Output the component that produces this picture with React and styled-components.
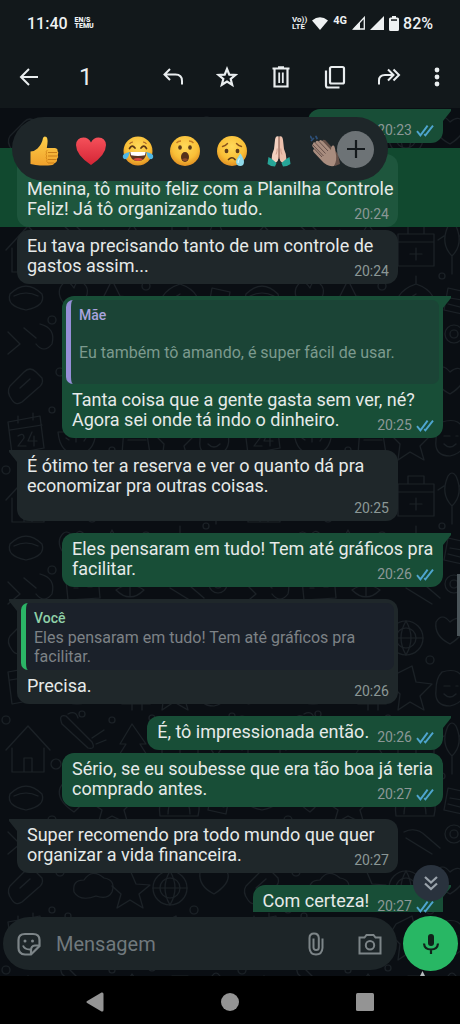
import React from "react";
import styled, { createGlobalStyle, css } from "styled-components";

const color = {
  header: "#12181b",
  wall: "#0a0e13",
  doodle: "#1b2126",
  sent: "#184e37",
  received: "#1f272a",
  text: "#e6eae9",
  icon: "#e9edef",
  muted: "#8b9796",
};

const GlobalStyle = createGlobalStyle`
  *, *::before, *::after { box-sizing: border-box; }
  html, body { margin: 0; padding: 0; background: #000; }
  body { font-family: Roboto, "Noto Sans", sans-serif; color: ${color.text}; }
  button { border: 0; padding: 0; background: none; color: inherit; font: inherit; cursor: pointer; }
  svg { display: block; flex: none; }
`;

const Page = styled.div`
  min-height: 100vh;
  display: flex;
  flex-direction: column;
  overflow-x: hidden;
`;

const Header = styled.header`
  background: ${color.header};
`;

const StatusBar = styled.div`
  display: flex;
  align-items: center;
  height: 46px;
  padding: 0 27px;
  font-size: 16px;
  font-weight: 500;
  color: #eef1f2;
`;

const Clock = styled.time`
  margin-right: 7px;
`;

const TinyStack = styled.span`
  display: flex;
  flex-direction: column;
  font-size: 7px;
  line-height: 6px;
  font-weight: 900;
  margin-right: ${(p) => (p.$push ? "auto" : "5px")};
`;

const LteStack = styled(TinyStack)`
  font-size: 8px;
  line-height: 7px;
  font-weight: 700;
`;

const StatusIcons = styled.span`
  display: flex;
  align-items: center;
  gap: 5px;
  margin-right: 4px;
`;

const Network = styled.span`
  font-size: 11px;
  line-height: 12px;
  padding-bottom: 4px;
  font-weight: 700;
`;

const Toolbar = styled.div`
  display: flex;
  align-items: center;
  height: 62px;
  padding: 0 2px;
  color: ${color.icon};
`;

const ToolButton = styled.button`
  display: flex;
  align-items: center;
  justify-content: center;
  width: ${(p) => (p.$narrow ? "42px" : "54px")};
  height: 48px;
`;

const Count = styled.span`
  flex: 1;
  padding-left: 23px;
  font-size: 24px;
  line-height: 28px;
`;

const Chat = styled.main`
  position: relative;
  flex: 1;
  display: flex;
  flex-direction: column;
  background: ${color.wall};
`;

const Wallpaper = styled.svg`
  position: absolute;
  inset: 0;
  width: 100%;
  height: 100%;
`;

const Messages = styled.section`
  position: relative;
  padding-top: 1px;
`;

const Row = styled.div`
  display: flex;
  justify-content: ${(p) => (p.$sent ? "flex-end" : "flex-start")};
  padding: 0 17px;
  margin-top: ${(p) => (p.$close ? "3px" : "12px")};
  &:first-child { margin-top: 0; }
  ${(p) =>
    p.$selected &&
    css`
      margin-top: 5px;
      padding-top: 6px;
      background: #11492f;
    `}
`;

const Bubble = styled.article`
  position: relative;
  width: ${(p) => (p.$wide ? "calc(100% - 45px)" : "auto")};
  min-width: ${(p) => (p.$short ? "135px" : "0")};
  min-height: ${(p) => (p.$selected ? "73px" : p.$cut ? "0" : "34px")};
  display: flex;
  flex-direction: column;
  justify-content: flex-end;
  border-radius: ${(p) => (p.$cut ? "12px 12px 0 0" : "12px")};
  background: ${(p) => (p.$selected ? "#1e563d" : p.$sent ? color.sent : color.received)};
  ${(p) =>
    p.$tail &&
    css`
      border-top-${p.$sent ? "right" : "left"}-radius: 0;
      &::after {
        content: "";
        position: absolute;
        top: 0;
        ${p.$sent ? "right" : "left"}: -8px;
        width: 8px;
        height: 12px;
        background: inherit;
        clip-path: polygon(${p.$sent ? "0 0, 100% 0, 100% 2px, 0 100%" : "0 0, 100% 0, 100% 100%, 0 2px"});
      }
    `}
`;

const Content = styled.div`
  display: ${(p) => (p.$inline ? "flex" : "grid")};
  grid-template-columns: minmax(0, 1fr);
  gap: ${(p) => (p.$inline ? "8px" : "0")};
  justify-content: ${(p) => (p.$inline ? "flex-end" : "stretch")};
  padding: 6px 9px ${(p) => (p.$cut ? "1px" : "8px")} 10px;
`;

const Text = styled.p`
  grid-area: 1 / 1;
  margin: 0;
  font-size: 18px;
  line-height: 20px;
  white-space: nowrap;
`;

const Line = styled.span`
  display: block;
`;

const Meta = styled.footer`
  grid-area: ${(p) => (p.$below ? "2 / 1" : "1 / 1")};
  justify-self: end;
  align-self: end;
  display: flex;
  align-items: center;
  gap: 4px;
  height: 12px;
  margin-top: ${(p) => (p.$below ? "6px" : "0")};
  margin-bottom: -1px;
  font-size: 14px;
  line-height: 12px;
  color: ${color.muted};
`;

const Quote = styled.blockquote`
  margin: 4px 4px 0;
  padding: 5px 8px 4px;
  border-left: 5px solid ${(p) => (p.$own ? "#2bb566" : "#968fd8")};
  border-radius: 7px;
  background: ${(p) => (p.$sent ? "#1b4436" : "#1b212a")};
`;

const QuoteName = styled.cite`
  display: block;
  font-style: normal;
  font-size: 14px;
  line-height: 20px;
  font-weight: 500;
  color: ${(p) => (p.$own ? "#8fd0a8" : "#a9a3dd")};
`;

const QuoteText = styled.div`
  display: flex;
  flex-direction: column;
  justify-content: center;
  min-height: ${(p) => (p.$tall ? "55px" : "38px")};
  font-size: 16px;
  line-height: 19px;
  white-space: nowrap;
  color: ${(p) => (p.$tall ? "#7c9a8e" : "#7d8286")};
`;

const ReactionBar = styled.div`
  position: absolute;
  top: 9px;
  left: 12px;
  display: flex;
  align-items: center;
  height: 64px;
  padding: 4px 14px 0 8px;
  border-radius: 32px;
  background: #1e2629;
`;

const ReactionButton = styled.button`
  display: flex;
  justify-content: center;
  width: 47px;
`;

const MoreReactions = styled.button`
  display: flex;
  align-items: center;
  justify-content: center;
  width: 37px;
  height: 37px;
  margin: 0 0 4px -12px;
  border-radius: 50%;
  background: #6d7376;
  color: #14191c;
`;

const ScrollThumb = styled.span`
  position: absolute;
  top: 466px;
  right: 0;
  width: 3px;
  height: 62px;
  background: #4a5459;
`;

const JumpButton = styled.button`
  position: absolute;
  right: 11px;
  bottom: 75px;
  width: 36px;
  height: 36px;
  display: flex;
  align-items: center;
  justify-content: center;
  border-radius: 50%;
  background: #29323d;
  color: #9aa3ab;
`;

const Composer = styled.form`
  position: relative;
  display: flex;
  align-items: center;
  gap: 6px;
  padding: 4px 2px 5px 3px;
`;

const Field = styled.div`
  flex: 1;
  min-width: 0;
  height: 53px;
  display: flex;
  align-items: center;
  padding-left: 12px;
  border-radius: 27px;
  background: #1d2528;
  color: #7d8588;
`;

const FieldButton = styled.button`
  display: flex;
  align-items: center;
  justify-content: center;
  width: ${(p) => (p.$wide ? "54px" : "28px")};
  height: 40px;
  flex: none;
`;

const MessageInput = styled.input`
  flex: 1;
  min-width: 0;
  margin: 0 0 0 13px;
  padding: 0;
  border: 0;
  outline: 0;
  background: none;
  color: ${color.text};
  font: 400 20px/24px Roboto, "Noto Sans", sans-serif;
  &::placeholder { color: #70797d; opacity: 1; }
`;

const MicButton = styled.button`
  display: flex;
  align-items: center;
  justify-content: center;
  flex: none;
  width: 55px;
  height: 55px;
  border-radius: 50%;
  background: #28b764;
  color: #10231a;
`;

const Tip = styled.svg`
  position: absolute;
  right: 35px;
  bottom: 0;
`;

const NavBar = styled.nav`
  display: flex;
  height: 49px;
  padding: 2px 6% 0;
  background: #000;
  color: #949494;
`;

const NavButton = styled.button`
  flex: 1;
  display: flex;
  align-items: center;
  justify-content: center;
`;

const Stroke = ({ w = 24, h = 24, sw = 2, box, children, ...rest }) => (
  <svg width={w} height={h} viewBox={box || `0 0 ${w} ${h}`} fill="none" stroke="currentColor" strokeWidth={sw} aria-hidden="true" {...rest}>
    {children}
  </svg>
);

const Checks = () => (
  <Stroke w={18} h={13} sw={1.9} color="#4ea5cf">
    <path d="M1 7.2 4.4 11.4 11.6 1.6M8.2 10.2 9.4 11.4 17 1.6" />
  </Stroke>
);

const toolIcons = {
  reply: (
    <Stroke w={22} h={22} sw={2}>
      <path d="M8 3 2.500 8.500 8 14M2.500 8.500H13.500Q20 8.500 20 15V18.500" />
    </Stroke>
  ),
  star: (
    <Stroke w={22} h={22} sw={2.200}>
      <path d="M11 3 13.300 8.600 19.300 9 14.700 12.900 16.200 18.800 11 15.600 5.800 18.800 7.300 12.900 2.700 9 8.700 8.600Z" strokeLinejoin="miter" />
    </Stroke>
  ),
  trash: (
    <Stroke w={20} h={24} sw={2.200}>
      <path d="M1.500 3.500H18.500M7 2.300H13M3.500 4V21.500H16.500V4" />
      <path d="M8.200 7.500V18M11.800 7.500V18" strokeWidth="1.800" />
    </Stroke>
  ),
  copy: (
    <Stroke w={22} h={24} sw={2.200}>
      <rect x="6" y="2" width="14" height="16.500" rx="1.500" />
      <path d="M2 5.500V20.500Q2 22.500 4 22.500H15.500" />
    </Stroke>
  ),
  forward: (
    <Stroke w={24} h={22} sw={2}>
      <path d="M2 18.500V14.500Q2 9 8 9H16M11 3.500 16.500 9 11 14.500M16.500 3.500 22 9 16.500 14.500" />
    </Stroke>
  ),
};

const faceFill = "url(#face)";

const Laugh = () => (
  <svg width="32" height="32" viewBox="0 0 32 32" aria-hidden="true">
    <circle cx="16" cy="16" r="14.500" fill={faceFill} />
    <path d="M7.500 13.500Q10 9 13 13M19 13Q22 9 24.500 13.500" stroke="#5b3716" strokeWidth="1.700" fill="none" strokeLinecap="round" />
    <path d="M7.500 9Q9 7 11 7M21 7Q23 7 24.500 9" stroke="#a8662a" strokeWidth="1.200" fill="none" />
    <path d="M7.500 17H24.500Q24 26 16 26T7.500 17Z" fill="#5b3420" />
    <path d="M8.300 17H23.700L23 20.300Q16 21.500 9 20.300Z" fill="#fff" />
    <path d="M11 24.300Q16 21.500 21 24.300Q16 27.500 11 24.300Z" fill="#d9473f" />
    <path d="M7.500 17Q0 18.500 .8 22.200Q2 25.500 5 23.500Q7 21.500 7.500 17ZM24.500 17Q32 18.500 31.200 22.200Q30 25.500 27 23.500Q25 21.500 24.500 17Z" fill="#4fb7e6" />
  </svg>
);

const Wow = () => (
  <svg width="32" height="32" viewBox="0 0 32 32" aria-hidden="true">
    <circle cx="16" cy="16" r="15" fill={faceFill} />
    <ellipse cx="11" cy="12.500" rx="1.800" ry="2.300" fill="#5b3a1a" />
    <ellipse cx="21" cy="12.500" rx="1.800" ry="2.300" fill="#5b3a1a" />
    <path d="M7.500 8Q9 6 12 6M20 6Q23 6 24.500 8" stroke="#c47a22" strokeWidth="1.300" fill="none" />
    <ellipse cx="16" cy="22" rx="4" ry="5" fill="#54311b" />
    <path d="M13 24.500Q16 22 19 24.500Q16 28 13 24.500Z" fill="#8a4a2b" />
  </svg>
);

const Cry = () => (
  <svg width="32" height="32" viewBox="0 0 32 32" aria-hidden="true">
    <circle cx="16" cy="16" r="15" fill={faceFill} />
    <ellipse cx="10.500" cy="16" rx="1.900" ry="2.300" fill="#5b3a1a" />
    <ellipse cx="21.500" cy="16" rx="1.900" ry="2.300" fill="#5b3a1a" />
    <path d="M6.500 11.500Q9.500 11 11.500 8.500M20.500 8.500Q22.500 11 25.500 11.500" stroke="#8b541d" strokeWidth="1.400" fill="none" strokeLinecap="round" />
    <path d="M12.500 24.500Q16 21 19 24.500" stroke="#5b3a1a" strokeWidth="1.700" fill="none" strokeLinecap="round" />
    <path d="M24.500 18.500Q20 24.500 20 27Q20.500 31 24.200 31T28 27Q28 24 24.500 18.500Z" fill="#8fd9ea" />
    <path d="M23.500 23.500Q21.800 26 22.200 28" stroke="#e0f7fb" strokeWidth="1.200" fill="none" />
  </svg>
);

const Thumb = () => (
  <svg width="32" height="32" viewBox="0 0 32 32" aria-hidden="true">
    <path d="M2.500 16.500Q7 16 9.500 13.500Q14 9 15 3Q16 .5 18.500 2Q20.500 4 18.800 13H27Q30 13.500 29.500 16Q31 17 29.800 20Q31 22 29 24Q29.500 27 26.500 28.300Q25.500 30.500 20 30.500H12Q8 30 2.500 29Z" fill="url(#hand)" />
    <path d="M20 17.500H29M20 21H29.500M20 24.500H28.500M20 28H26" stroke="#c87d18" strokeWidth="1" />
    <path d="M19.500 15Q17.500 16 18.500 18Q17.500 19.500 18.700 21Q17.500 23 19 24.500Q18 27 20 28" stroke="#d98b1c" strokeWidth="1" fill="none" />
  </svg>
);

const Heart = () => (
  <svg width="32" height="32" viewBox="0 0 32 32" aria-hidden="true">
    <path d="M16 30Q1 20 1 10Q1.500 2.500 8.500 2.500Q13.500 2.500 16 7.500Q18.500 2.500 23.500 2.500Q30.500 2.500 31 10Q31 20 16 30Z" fill="url(#heart)" />
  </svg>
);

const Pray = () => (
  <svg width="32" height="32" viewBox="0 0 32 32" aria-hidden="true">
    <path d="M15.800 1.500Q12.500 0 12 5L11 14Q8.500 19 8.500 25L12.500 28Q15.500 26 15.800 22Z" fill="#f3d0bf" />
    <path d="M16.200 1.500Q19.500 0 20 5L21 14Q23.500 19 23.500 25L19.500 28Q16.500 26 16.200 22Z" fill="#ecc0ac" />
    <path d="M16 2V24" stroke="#a8705f" strokeWidth="1" />
    <path d="M13 19.500Q14.300 17 14.200 13.500M19 19.500Q17.700 17 17.800 13.500" stroke="#c99380" strokeWidth=".8" fill="none" />
    <path d="M5.500 22Q9 23.500 13.500 28L12 31.500Q8 31.500 4.500 29ZM26.500 22Q23 23.500 18.500 28L20 31.500Q24 31.500 27.500 29Z" fill="#27a597" />
  </svg>
);

const Clap = () => (
  <svg width="32" height="32" viewBox="0 0 32 32" aria-hidden="true">
    <path d="M12 6Q14 3 17 7L28 19L30 29L25 31L16 24Z" fill="#665149" />
    <path d="M3 9Q3 6 6 8L5.500 7.500Q6 4.500 9 6.500Q10 3.500 13 6.500L21 15Q21 10 23.500 10.500Q25 11 25.500 17Q27.500 25 24 31Q17 32 12 26L4 17.500Q1.800 14.500 4.500 14L2.500 11.500Q1.500 9.500 3 9Z" fill="#a88c7e" />
    <path d="M5.500 8 15.500 18.500M9 6.500 18 16M4.500 14 12 22M3 10 13.500 21" stroke="#66504a" strokeWidth="1" />
    <path d="M1.500 5.500 3.500 3.500M6 1.500 7 3.500M.5 1.500 1.500 3" stroke="#2d4f78" strokeWidth="1.700" strokeLinecap="round" />
  </svg>
);

const reactions = [
  ["Joinha", Thumb],
  ["Coração", Heart],
  ["Risada", Laugh],
  ["Surpresa", Wow],
  ["Tristeza", Cry],
  ["Gratidão", Pray],
  ["Palmas", Clap],
];

const EmojiPaints = () => (
  <defs>
    <radialGradient id="face" cx=".5" cy=".35" r=".65">
      <stop offset="0" stopColor="#ffd95a" />
      <stop offset=".65" stopColor="#f9bf37" />
      <stop offset="1" stopColor="#e18f22" />
    </radialGradient>
    <linearGradient id="hand" x1="0" y1="0" x2="0" y2="1">
      <stop offset="0" stopColor="#ffd04a" />
      <stop offset="1" stopColor="#f0a12b" />
    </linearGradient>
    <linearGradient id="heart" x1="0" y1="0" x2="0" y2="1">
      <stop offset="0" stopColor="#f5505a" />
      <stop offset="1" stopColor="#d42535" />
    </linearGradient>
  </defs>
);

const ChatWallpaper = () => (
  <Wallpaper aria-hidden="true">
    <EmojiPaints />
    <defs>
      <pattern id="doodles" width="236" height="250" patternUnits="userSpaceOnUse">
        <g fill="none" stroke={color.doodle} strokeWidth="1.200" strokeLinejoin="round" strokeLinecap="round">
          <path d="M10 28 24 14Q30 8 36 14L42 20Q44 26 38 30L22 44Q16 48 12 42Q6 34 10 28ZM20 30 30 21" />
          <circle cx="60" cy="14" r="4" />
          <circle cx="52" cy="52" r="3" />
          <path d="M74 34Q72 22 84 22Q92 10 104 20Q116 22 112 34Q108 42 96 38Q80 44 74 34Z" />
          <path d="M130 12 136 26 150 27 139 36 143 50 130 42 117 50 121 36 112 28" />
          <circle cx="170" cy="30" r="17" /><circle cx="170" cy="30" r="10" />
          <path d="M153 30H187M170 13Q160 30 170 47M170 13Q180 30 170 47" />
          <path d="M200 14Q206 4 214 14Q224 6 228 16Q230 26 214 36Q198 28 200 14Z" />
          <path d="M8 64 40 58 44 90 12 96ZM10 72 42 67M18 58V65M33 55V62" />
          <path d="M18 78Q24 74 24 80L18 88H26M32 74 28 83H37M34 78V88" />
          <path d="M58 74H96Q94 96 77 96T58 74ZM66 80 69 82M76 80V84M86 80 84 83" />
          <circle cx="106" cy="64" r="4" /><circle cx="112" cy="92" r="3" />
          <path d="M124 70Q134 58 146 70L150 96H122ZM128 82H146M132 96V102M142 96V102" />
          <path d="M160 66 176 58 180 74 196 76 184 88 188 102 174 94 162 102 164 86 154 76Z" />
          <path d="M206 64Q226 58 228 76Q232 94 214 98Q198 98 200 82Q200 70 206 64M208 78H214M220 78H222M208 86Q214 92 220 86" />
          <path d="M6 142 28 118 50 142M12 140V164H44V140M24 164V150H32V164" />
          <path d="M62 116Q58 106 66 108L92 134Q96 142 88 140ZM68 106Q76 102 78 110M92 130 104 122M96 136 106 132" />
          <circle cx="56" cy="156" r="5" /><circle cx="112" cy="112" r="3" />
          <path d="M132 116 120 136H126L116 152H130V162H136V152H150L140 136H146Z" />
          <path d="M162 126H198V158H162ZM162 134H198M172 126V118H188V126M174 146H186M180 140V152" />
          <path d="M212 118Q204 136 216 148Q228 136 220 118Q216 112 212 118ZM216 148V166M208 128 202 132M224 128 230 132" />
          <path d="M10 186Q26 170 42 186Q46 198 26 202Q6 198 10 186ZM14 188Q26 182 38 188" />
          <path d="M60 180Q66 168 74 180Q78 168 86 178Q92 188 74 204Q56 192 60 180Z" />
          <path d="M104 188 112 172 120 188 136 190 124 202 128 216 112 208 98 216 102 202 90 194" />
          <circle cx="146" cy="178" r="4" /><circle cx="142" cy="216" r="3" />
          <circle cx="68" cy="58" r="3" /><circle cx="194" cy="52" r="4" /><circle cx="92" cy="160" r="4" />
          <circle cx="52" cy="212" r="4" /><circle cx="232" cy="108" r="3" /><circle cx="152" cy="110" r="3" />
          <circle cx="206" cy="168" r="3" /><circle cx="6" cy="112" r="4" /><circle cx="82" cy="106" r="3" />
          <path d="M160 208Q156 184 180 176Q204 184 198 208ZM168 206Q168 192 180 186M180 176V168M190 206Q190 196 184 190" />
          <path d="M212 180 230 184 226 206 208 202ZM214 190 226 192M212 196 224 199" />
          <path d="M8 224 20 236 8 246M24 220 36 230M40 216Q56 220 52 236Q44 246 36 236" />
          <path d="M66 222 98 218 100 240 68 242ZM74 230H78M88 229H92" />
          <path d="M116 232Q130 222 144 232Q130 246 116 232ZM130 226V238" />
          <path d="M168 224Q180 218 190 228L204 240M170 230 196 246" />
          <circle cx="218" cy="226" r="9" /><circle cx="218" cy="226" r="4" />
        </g>
      </pattern>
    </defs>
    <rect width="100%" height="100%" fill="url(#doodles)" />
  </Wallpaper>
);

const messages = [
  { id: 1, sent: true, short: true, tail: true, lines: [], time: "20:23" },
  { id: 2, wide: true, selected: true, lines: ["Menina, tô muito feliz com a Planilha Controle", "Feliz! Já tô organizando tudo."], time: "20:24" },
  { id: 3, wide: true, close: true, lines: ["Eu tava precisando tanto de um controle de", "gastos assim..."], time: "20:24" },
  {
    id: 4, sent: true, wide: true, tail: true,
    quote: { name: "Mãe", lines: ["Eu também tô amando, é super fácil de usar."], tall: true },
    lines: ["Tanta coisa que a gente gasta sem ver, né?", "Agora sei onde tá indo o dinheiro."], time: "20:25",
  },
  { id: 5, wide: true, tail: true, below: true, lines: ["É ótimo ter a reserva e ver o quanto dá pra", "economizar pra outras coisas."], time: "20:25" },
  { id: 6, sent: true, wide: true, tail: true, lines: ["Eles pensaram em tudo! Tem até gráficos pra", "facilitar."], time: "20:26" },
  {
    id: 7, wide: true, tail: true,
    quote: { name: "Você", own: true, lines: ["Eles pensaram em tudo! Tem até gráficos pra", "facilitar."] },
    lines: ["Precisa."], time: "20:26",
  },
  { id: 8, sent: true, inline: true, tail: true, lines: ["É, tô impressionada então."], time: "20:26" },
  { id: 9, sent: true, wide: true, close: true, lines: ["Sério, se eu soubesse que era tão boa já teria", "comprado antes."], time: "20:27" },
  { id: 10, wide: true, tail: true, lines: ["Super recomendo pra todo mundo que quer", "organizar a vida financeira."], time: "20:27" },
  { id: 11, sent: true, inline: true, tail: true, cut: true, lines: ["Com certeza!"], time: "20:27" },
];

const Message = ({ m }) => (
  <Row $sent={m.sent} $close={m.close} $selected={m.selected}>
    <Bubble $sent={m.sent} $wide={m.wide} $short={m.short} $tail={m.tail} $selected={m.selected} $cut={m.cut}>
      {m.quote && (
        <Quote $own={m.quote.own} $sent={m.sent}>
          <QuoteName $own={m.quote.own}>{m.quote.name}</QuoteName>
          <QuoteText $tall={m.quote.tall}>
            {m.quote.lines.map((l) => <Line key={l}>{l}</Line>)}
          </QuoteText>
        </Quote>
      )}
      <Content $inline={m.inline} $cut={m.cut}>
        {m.lines.length > 0 && (
          <Text>{m.lines.map((l) => <Line key={l}>{l}</Line>)}</Text>
        )}
        <Meta $below={m.below}>
          <time>{m.time}</time>
          {m.sent && <Checks />}
        </Meta>
      </Content>
    </Bubble>
  </Row>
);

export default function App() {
  return (
    <Page>
      <GlobalStyle />
      <Header>
        <StatusBar>
          <Clock>11:40</Clock>
          <TinyStack $push><span>EN/S</span><span>TEMU</span></TinyStack>
          <LteStack><span>Vo))</span><span>LTE</span></LteStack>
          <StatusIcons>
            <svg width="16" height="13" viewBox="0 0 16 13" fill="currentColor"><path d="M0 3.500Q8-3 16 3.500L8 13Z" /></svg>
            <Network>4G</Network>
            <Stroke w={13} h={14} sw={1.300}>
              <path d="M1.500 13H12.300V1.500Z" /><path d="M1 13.500 8 6V13.500Z" fill="currentColor" stroke="none" />
            </Stroke>
            <svg width="14" height="14" viewBox="0 0 14 14" fill="currentColor"><path d="M0 14H14V0Z" /></svg>
            <svg width="10" height="15" viewBox="0 0 10 15" fill="currentColor"><path d="M3 0H7V1.500H8.500Q10 1.500 10 3V13.500Q10 15 8.500 15H1.500Q0 15 0 13.500V3Q0 1.500 1.500 1.500H3Z" /><path d="M2 3.300H8V4.800H2Z" fill={color.header} /></svg>
          </StatusIcons>
          <span>82%</span>
        </StatusBar>
        <Toolbar>
          <ToolButton aria-label="Voltar">
            <Stroke w={20} h={20} sw={2}><path d="M19 10H2M10 2 2 10 10 18" /></Stroke>
          </ToolButton>
          <Count>1</Count>
          <ToolButton aria-label="Responder">{toolIcons.reply}</ToolButton>
          <ToolButton aria-label="Favoritar">{toolIcons.star}</ToolButton>
          <ToolButton aria-label="Apagar">{toolIcons.trash}</ToolButton>
          <ToolButton aria-label="Copiar">{toolIcons.copy}</ToolButton>
          <ToolButton aria-label="Encaminhar">{toolIcons.forward}</ToolButton>
          <ToolButton $narrow aria-label="Mais opções">
            <svg width="6" height="20" viewBox="0 0 6 20" fill="currentColor">
              <circle cx="3" cy="3" r="2.400" /><circle cx="3" cy="10" r="2.400" /><circle cx="3" cy="17" r="2.400" />
            </svg>
          </ToolButton>
        </Toolbar>
      </Header>

      <Chat>
        <ChatWallpaper />
        <Messages>
          {messages.map((m) => <Message key={m.id} m={m} />)}
        </Messages>
        <ReactionBar>
          {reactions.map(([label, Icon]) => (
            <ReactionButton key={label} aria-label={label}><Icon /></ReactionButton>
          ))}
          <MoreReactions aria-label="Mais reações">
            <Stroke w={20} h={20} sw={2.200}><path d="M10 1V19M1 10H19" /></Stroke>
          </MoreReactions>
        </ReactionBar>
        <ScrollThumb />
        <JumpButton aria-label="Ir para o fim">
          <Stroke w={16} h={16} sw={2.200}><path d="M2 2 8 7.500 14 2M2 8.500 8 14 14 8.500" /></Stroke>
        </JumpButton>
        <Composer onSubmit={(e) => e.preventDefault()}>
          <Field>
            <FieldButton type="button" aria-label="Figurinhas">
              <Stroke w={24} h={24} sw={2.200}>
                <path d="M8 2H16Q22.500 2 22.500 8V14L14 22.500H8Q1.500 22 1.500 16V8Q1.500 2 8 2Z" />
                <path d="M22.500 13.500H18Q14 14 14 18V22.500" />
                <path d="M6 13.500Q7.500 17.500 13 17.500" strokeWidth="2" />
                <circle cx="8" cy="9" r="1.500" fill="currentColor" stroke="none" /><circle cx="15.500" cy="9" r="1.500" fill="currentColor" stroke="none" />
              </Stroke>
            </FieldButton>
            <MessageInput aria-label="Mensagem" placeholder="Mensagem" />
            <FieldButton type="button" $wide aria-label="Anexar">
              <Stroke w={16} h={24} sw={2}>
                <path d="M14.500 6.500V16Q14 22.500 8 22.500T1.500 16V6Q1.500 1.500 6 1.500T10.800 6V15.500Q10.800 18 8.200 18T5.500 15.500V6.500" />
              </Stroke>
            </FieldButton>
            <FieldButton type="button" $wide aria-label="Câmera">
              <Stroke w={24} h={22} sw={2}>
                <path d="M1.500 4.500H6.500L8.500 2H15.500L17.500 4.500H22.500V20.500H1.500Z" /><circle cx="12" cy="12.300" r="4.200" />
              </Stroke>
            </FieldButton>
          </Field>
          <MicButton type="button" aria-label="Gravar áudio">
            <Stroke w={18} h={24} sw={2.200}>
              <rect x="6" y="2" width="6" height="12" rx="3" fill="currentColor" stroke="none" />
              <path d="M2 11.500Q2.500 17.500 9 17.500T16 11.500M9 17.500V22" />
            </Stroke>
          </MicButton>
        </Composer>
        <Tip width="5" height="5" viewBox="0 0 5 5" aria-hidden="true"><path d="M2.500 0 5 5H0Z" fill="#b5bbbd" /></Tip>
      </Chat>

      <NavBar>
        <NavButton aria-label="Voltar tela">
          <svg width="18" height="20" viewBox="0 0 18 20" fill="currentColor"><path d="M.8 9.200 15.500.6Q17.500 0 17.500 2V18Q17.500 20 15.500 19.400L.8 10.800Q0 10 .8 9.200Z" /></svg>
        </NavButton>
        <NavButton aria-label="Início">
          <svg width="18" height="18" viewBox="0 0 18 18" fill="currentColor"><circle cx="9" cy="9" r="9" /></svg>
        </NavButton>
        <NavButton aria-label="Recentes">
          <svg width="18" height="18" viewBox="0 0 18 18" fill="currentColor"><rect width="18" height="18" rx="1.500" /></svg>
        </NavButton>
      </NavBar>
    </Page>
  );
}
